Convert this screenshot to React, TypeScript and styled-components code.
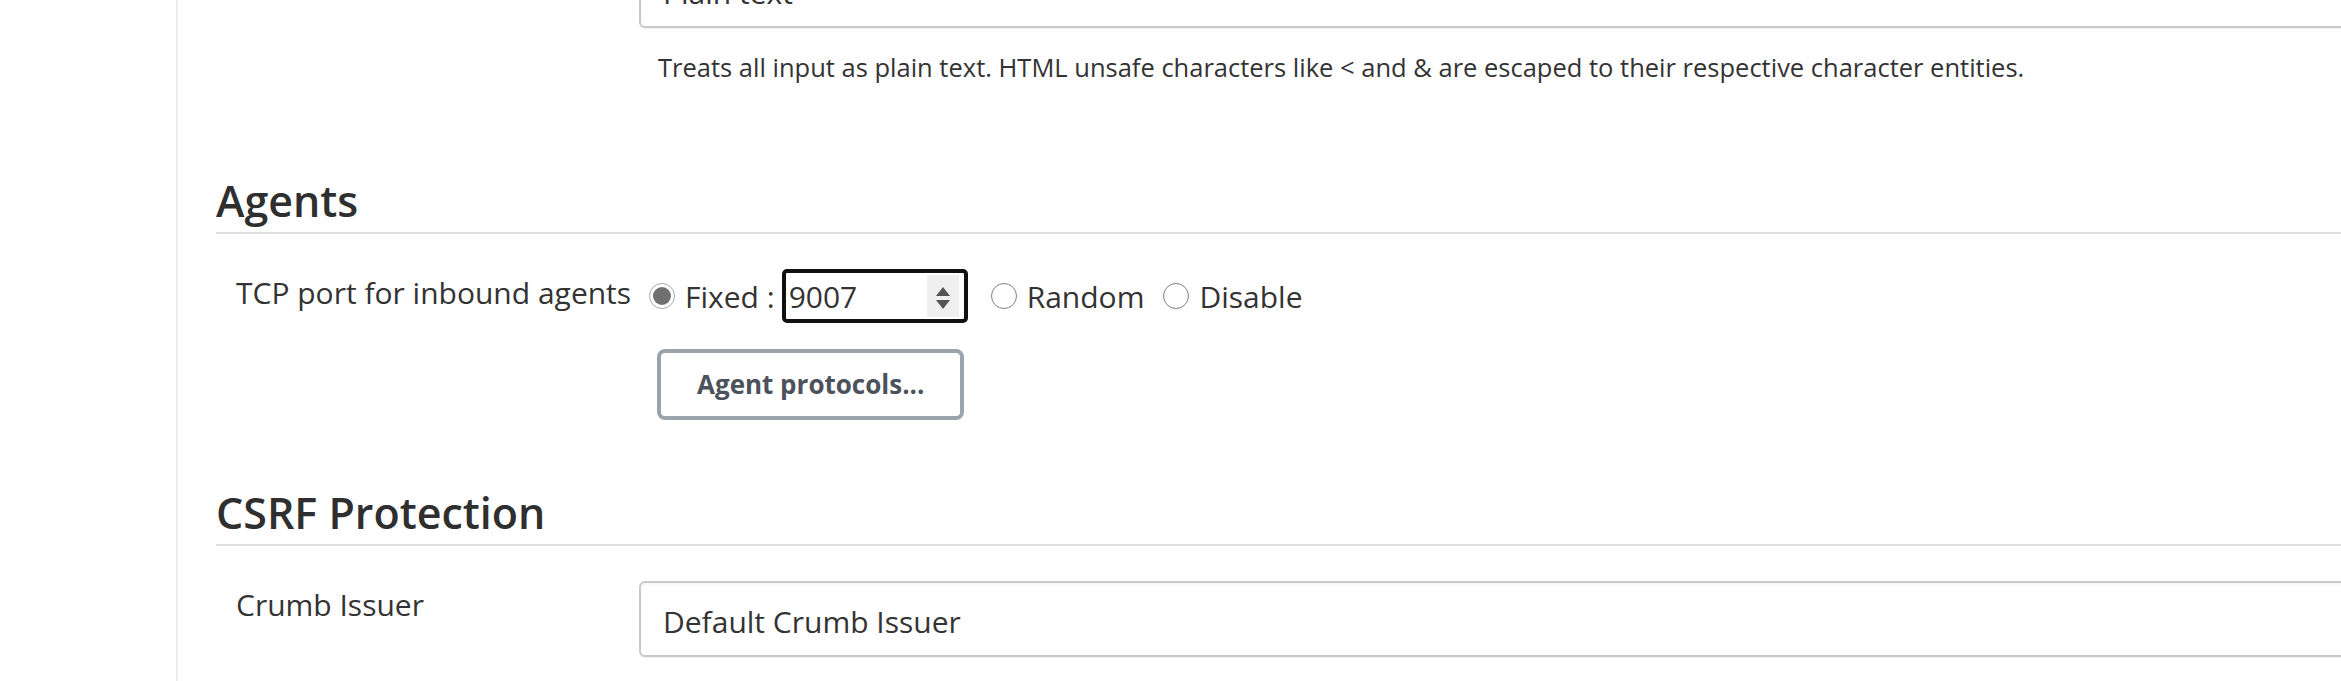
import React from 'react';
import styled, { createGlobalStyle } from 'styled-components';

const GlobalStyle = createGlobalStyle`
  html, body {
    margin: 0;
    padding: 0;
    background: #fff;
    overflow: hidden;
  }
  body {
    font-family: "Open Sans", "Noto Sans", "DejaVu Sans", sans-serif;
    color: #333;
  }
`;

const Page = styled.div`
  display: flex;
  min-height: 100vh;
`;

const Gutter = styled.div`
  width: 176px;
  flex-shrink: 0;
  border-right: 2px solid #ececec;
`;

const Main = styled.main`
  flex: 1;
  min-width: 0;
  display: flex;
  flex-direction: column;
  padding-left: 38px;
`;

const FieldRow = styled.div<{ $gap: number }>`
  display: grid;
  grid-template-columns: 423px minmax(0, 1fr);
  margin-top: ${props => props.$gap}px;
`;

const FieldLabel = styled.div`
  padding: 1px 0 0 20px;
  font-size: 30px;
  line-height: 45px;
  white-space: nowrap;
`;

const Controls = styled.div`
  display: flex;
  flex-direction: column;
  min-width: 0;
`;

const SelectBox = styled.div`
  box-sizing: border-box;
  height: 76px;
  margin-right: -40px;
  display: flex;
  align-items: center;
  padding: 4px 22px 0;
  border: 2px solid #c9c9c9;
  border-radius: 6px;
  box-shadow: inset 0 2px 4px rgba(0, 0, 0, 0.04), 0 1px 0 rgba(0, 0, 0, 0.05);
  font-size: 30px;
  line-height: 45px;
  white-space: nowrap;
`;

const HelpText = styled.div`
  margin-top: 22px;
  padding-left: 19px;
  font-size: 25.5px;
  line-height: 34px;
  white-space: nowrap;
`;

const SectionTitle = styled.h2<{ $gap: number }>`
  margin: ${props => props.$gap}px 0 0;
  padding-bottom: 5px;
  border-bottom: 2px solid #e0e0e0;
  font-size: 43px;
  font-weight: 600;
  line-height: 52px;
  color: #2f2f2f;
`;

const RadioGroup = styled.div`
  display: flex;
  align-items: center;
  height: 54px;
  padding-left: 10px;
`;

const Option = styled.label<{ $space?: number }>`
  display: inline-flex;
  align-items: center;
  gap: 10px;
  margin-left: ${props => props.$space ?? 0}px;
  font-size: 30px;
  line-height: 45px;
  white-space: nowrap;
`;

const Radio = styled.span<{ $checked?: boolean }>`
  position: relative;
  box-sizing: border-box;
  width: 26px;
  height: 26px;
  flex-shrink: 0;
  border-radius: 50%;
  border: 1.5px solid ${props => (props.$checked ? '#a8a8a8' : '#808080')};
  background: #fff;

  &::after {
    content: '';
    display: ${props => (props.$checked ? 'block' : 'none')};
    position: absolute;
    inset: 3px;
    border-radius: 50%;
    background: #707070;
  }
`;

const NumberField = styled.div`
  box-sizing: border-box;
  display: flex;
  align-items: center;
  width: 186px;
  height: 54px;
  margin-left: 7px;
  padding: 0 5px 0 3px;
  border: 4px solid #111;
  border-radius: 5px;
  background: #fff;
  font-size: 30px;
  line-height: 45px;
`;

const NumberValue = styled.span`
  flex: 1;
`;

const Spinner = styled.span`
  display: flex;
  width: 32px;
  height: 42px;
  background: #efefef;
`;

const ActionButton = styled.button`
  align-self: flex-start;
  box-sizing: border-box;
  height: 71px;
  margin: 26px 0 0 18px;
  padding: 0 36px;
  border: 4px solid #9ba3ab;
  border-radius: 8px;
  background: #fff;
  color: #4b525b;
  font-family: inherit;
  font-size: 26px;
  font-weight: 700;
  line-height: 35px;
  white-space: nowrap;
`;

const SpinArrows = () => (
  <svg width="32" height="42" viewBox="0 0 32 42" fill="#555">
    <polygon points="16,12 23,21 9,21" />
    <polygon points="9,25 23,25 16,34" />
  </svg>
);

export default function App() {
  return (
    <>
      <GlobalStyle />
      <Page>
        <Gutter />
        <Main>
          <FieldRow $gap={-48}>
            <FieldLabel />
            <Controls>
              <SelectBox>Plain text</SelectBox>
              <HelpText>
                Treats all input as plain text. HTML unsafe characters like &lt; and &amp; are escaped to
                their respective character entities.
              </HelpText>
            </Controls>
          </FieldRow>

          <SectionTitle $gap={91}>Agents</SectionTitle>
          <FieldRow $gap={35}>
            <FieldLabel>TCP port for inbound agents</FieldLabel>
            <Controls>
              <RadioGroup>
                <Option>
                  <Radio $checked />
                  Fixed :
                </Option>
                <NumberField>
                  <NumberValue>9007</NumberValue>
                  <Spinner>
                    <SpinArrows />
                  </Spinner>
                </NumberField>
                <Option $space={23}>
                  <Radio />
                  Random
                </Option>
                <Option $space={19}>
                  <Radio />
                  Disable
                </Option>
              </RadioGroup>
              <ActionButton>Agent protocols...</ActionButton>
            </Controls>
          </FieldRow>

          <SectionTitle $gap={67}>CSRF Protection</SectionTitle>
          <FieldRow $gap={35}>
            <FieldLabel>Crumb Issuer</FieldLabel>
            <Controls>
              <SelectBox>Default Crumb Issuer</SelectBox>
            </Controls>
          </FieldRow>
        </Main>
      </Page>
    </>
  );
}
